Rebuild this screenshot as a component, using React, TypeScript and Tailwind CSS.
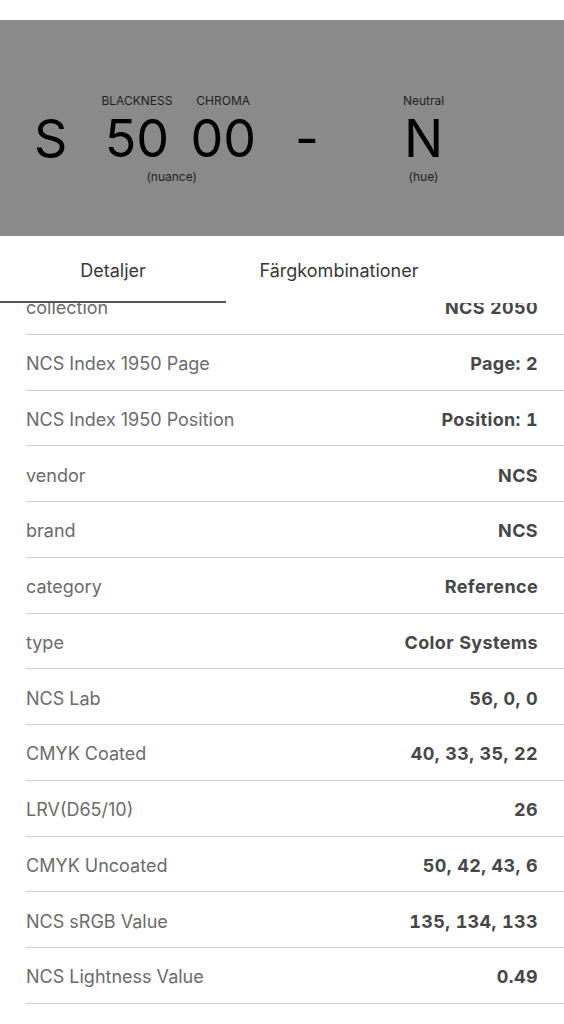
import React, { useState } from "react";

const ROWS: [string, string][] = [
  ["collection", "NCS 2050"],
  ["NCS Index 1950 Page", "Page: 2"],
  ["NCS Index 1950 Position", "Position: 1"],
  ["vendor", "NCS"],
  ["brand", "NCS"],
  ["category", "Reference"],
  ["type", "Color Systems"],
  ["NCS Lab", "56, 0, 0"],
  ["CMYK Coated", "40, 33, 35, 22"],
  ["LRV(D65/10)", "26"],
  ["CMYK Uncoated", "50, 42, 43, 6"],
  ["NCS sRGB Value", "135, 134, 133"],
  ["NCS Lightness Value", "0.49"],
];

const TABS = ["Detaljer", "Färgkombinationer"];

function Label({ children, className = "" }: { children?: React.ReactNode; className?: string }) {
  return <div className={`h-[12px] text-[12px] leading-[12px] text-[#1f1f1f] ${className}`}>{children}</div>;
}

function Big({ children }: { children: React.ReactNode }) {
  return <div className="text-[52px] leading-[64px] text-black">{children}</div>;
}

function Part({ top, value, bottom }: { top?: string; value: string; bottom?: string }) {
  return (
    <div className="flex flex-col items-center">
      <Label>{top}</Label>
      <Big>{value}</Big>
      <Label>{bottom}</Label>
    </div>
  );
}

export default function App() {
  const [tab, setTab] = useState(0);

  return (
    <div className="flex h-[1024px] w-[564px] flex-col overflow-hidden bg-white" style={{ fontFamily: "Inter, 'Noto Sans', sans-serif" }}>
      <div className="h-[20px] bg-white" />
      <div className="flex h-[216px] items-start bg-[#8a8a8a] pl-[34px] pt-[75px]">
        <Part value="S" />
        <div className="ml-[34px] flex flex-col items-center">
          <div className="flex gap-[18px]">
            <div className="flex flex-col items-center">
              <Label>BLACKNESS</Label>
              <Big>50</Big>
            </div>
            <div className="flex flex-col items-center">
              <Label>CHROMA</Label>
              <Big>00</Big>
            </div>
          </div>
          <Label className="mr-[14px]">(nuance)</Label>
        </div>
        <div className="ml-[39px]">
          <Part value="-" />
        </div>
        <div className="ml-[84px]">
          <Part top="Neutral" value="N" bottom="(hue)" />
        </div>
      </div>

      <div className="relative flex-1 overflow-hidden">
        <div className="relative z-10 flex h-[67px] bg-white">
          {TABS.map((t, i) => (
            <button
              key={t}
              onClick={() => setTab(i)}
              className="relative flex w-[226px] items-center justify-center pt-[1px] text-[18px] text-[#383838]"
            >
              {t}
              {tab === i && <span className="absolute bottom-0 left-0 h-[2px] w-full bg-[#555]" />}
            </button>
          ))}
        </div>
        <div className="-mt-[24px]">
          {ROWS.map(([k, v]) => (
            <div key={k} className="ml-[26px] flex h-[55.75px] items-center justify-between border-b border-[#cfcfcf] pr-[26px] pt-[3px]">
              <span className="text-[18px] text-[#6b6b6b]">{k}</span>
              <span className="text-[18px] font-bold tracking-[0.02em] text-[#474747] tabular-nums">{v}</span>
            </div>
          ))}
        </div>
      </div>
    </div>
  );
}
